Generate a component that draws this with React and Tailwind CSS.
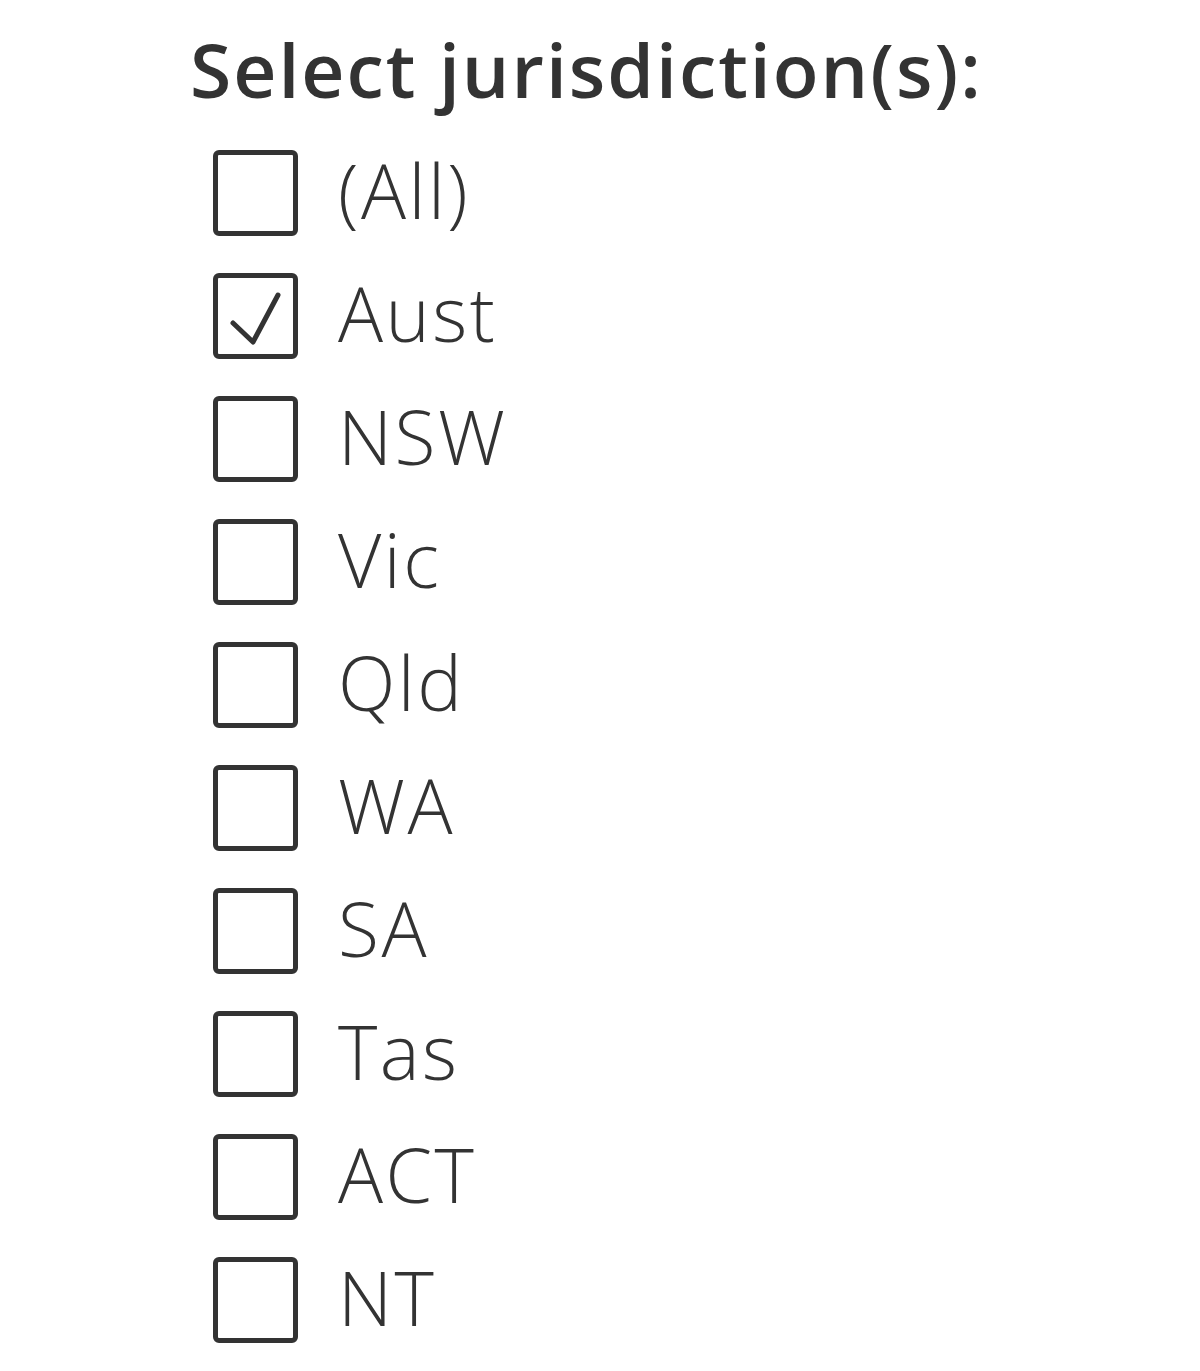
import React from "react";

const items = [
  { label: "(All)", checked: false },
  { label: "Aust", checked: true },
  { label: "NSW", checked: false },
  { label: "Vic", checked: false },
  { label: "Qld", checked: false },
  { label: "WA", checked: false },
  { label: "SA", checked: false },
  { label: "Tas", checked: false },
  { label: "ACT", checked: false },
  { label: "NT", checked: false },
];

function Box({ checked }) {
  return (
    <div className="w-[85px] h-[86px] shrink-0 border-[5px] border-[#333333] rounded-[6px] bg-white relative">
      {checked && (
        <svg className="absolute inset-0" width="75" height="76" viewBox="0 0 75 76">
          <path d="M15 45 L35 64 L60 17" fill="none" stroke="#333333" strokeWidth="5" strokeLinecap="round" strokeLinejoin="round" />
        </svg>
      )}
    </div>
  );
}

export default function App() {
  return (
    <div className="w-[1200px] h-[1371px] bg-white text-[#333333] pl-[190px] pt-[19px]" style={{ fontFamily: '"Open Sans", "Noto Sans", sans-serif' }}>
      <h1 className="text-[75px] font-semibold tracking-[2px] leading-[100px]">Select jurisdiction(s):</h1>
      <div className="flex flex-col gap-[37px] pl-[23px] pt-[31px]">
        {items.map((it) => (
          <div key={it.label} className="flex items-center gap-[40px] h-[86px]">
            <Box checked={it.checked} />
            <span className="text-[75px] font-light tracking-[2.5px] leading-none -translate-y-[3px]">{it.label}</span>
          </div>
        ))}
      </div>
    </div>
  );
}
